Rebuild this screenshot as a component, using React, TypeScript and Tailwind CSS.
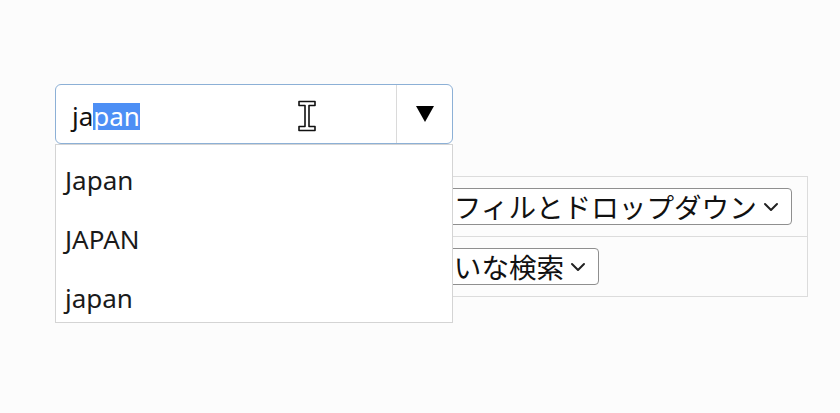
import React from 'react';

const options = ['Japan', 'JAPAN', 'japan'];

// first column sits under the open list, so it shows no text here
const rows = [
  { id: 'mode', value: 'オートフィルとドロップダウン' },
  { id: 'search', value: 'あいまいな検索' },
];

function Chevron() {
  return (
    <svg width="16" height="10" viewBox="0 0 16 10" className="ml-[6px] shrink-0">
      <path d="M2 2 L8 8 L14 2" fill="none" stroke="#222" strokeWidth="2" strokeLinecap="round" strokeLinejoin="round" />
    </svg>
  );
}

function IBeam() {
  return (
    <svg width="20" height="32" viewBox="0 0 20 32" className="absolute left-[241px] top-[15px]">
      <path
        d="M2 1.5 H18 V5.5 H12 V26.5 H18 V30.5 H2 V26.5 H8 V5.5 H2 Z"
        fill="#fff"
        stroke="#111"
        strokeWidth="1.6"
        strokeLinejoin="round"
      />
    </svg>
  );
}

export default function App() {
  return (
    <div
      className="relative w-[840px] h-[413px] overflow-hidden bg-[#fcfcfc] pt-[84px] pl-[55px]"
      style={{ fontFamily: "'Noto Sans', 'Noto Sans CJK JP', sans-serif" }}
    >
      {/* Combobox */}
      <div className="relative z-10 w-[398px]">
        <div className="flex h-[60px] rounded-[6px] border border-[#8cb0d6] bg-white">
          <div className="relative flex flex-1 items-center pl-[16px] pt-[4px] text-[26px] text-[#111]">
            <span className="inline-block leading-[27px]">ja</span>
            <span className="inline-block bg-[#4d8ff5] leading-[27px] text-white">pan</span>
            <IBeam />
          </div>
          <div className="w-px bg-[#dadada]" />
          <div className="flex w-[55px] items-center justify-center">
            <svg width="18" height="16" viewBox="0 0 18 16">
              <polygon points="0,0 18,0 9,16" fill="#000" />
            </svg>
          </div>
        </div>

        <div className="absolute left-0 top-[60px] h-[179px] w-full border border-[#d4d4d4] bg-white">
          {options.map((o) => (
            <div key={o} className="flex h-[59px] items-center pl-[9px] pt-[11px] text-[26px] text-[#1a1a1a]">
              {o}
            </div>
          ))}
        </div>
      </div>

      {/* Settings table behind the list */}
      <table className="mt-[32px] w-[753px] border-collapse">
        <tbody>
          {rows.map((r) => (
            <tr key={r.id} className="h-[60px]">
              <td className="w-[304px] border border-[#dcdcdc] px-[6px]" />
              <td className="border border-[#dcdcdc] px-[6px]">
                <div
                  className="inline-flex h-[37px] items-center rounded-[4px] border border-[#8f8f8f] bg-white pl-[4px] pr-[12px] text-[27.6px] leading-none text-[#111]"
                  style={{ fontFamily: "'Noto Sans CJK JP', sans-serif" }}
                >
                  {r.value}
                  <Chevron />
                </div>
              </td>
            </tr>
          ))}
        </tbody>
      </table>
    </div>
  );
}
